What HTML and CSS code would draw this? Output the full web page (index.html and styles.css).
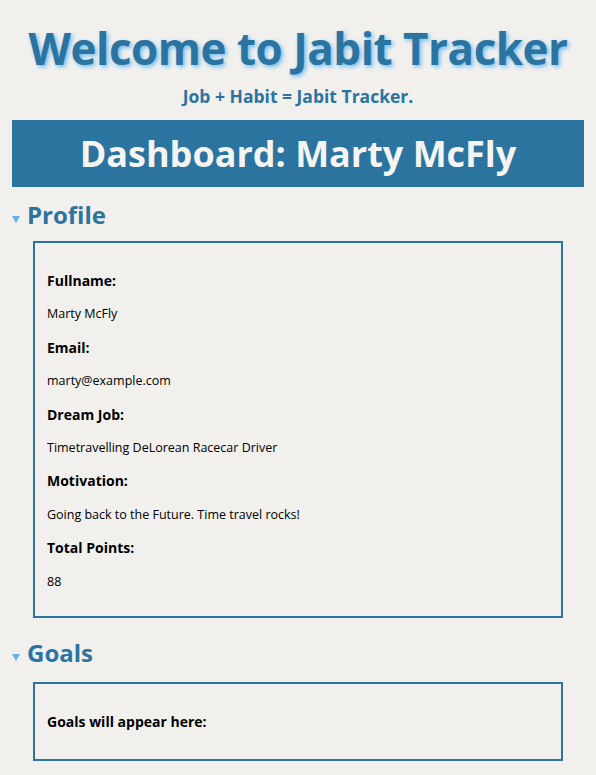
FILE: index.html
```html
<!DOCTYPE html>
<html lang="en">
<head>
<meta charset="utf-8">
<title>Jabit Tracker</title>
<link rel="stylesheet" href="styles.css">
</head>
<body>
<header class="site-header">
  <h1 class="site-title">Welcome to Jabit Tracker</h1>
  <p class="tagline">Job + Habit = Jabit Tracker.</p>
</header>
<div class="banner"><h2 class="banner-title">Dashboard: Marty McFly</h2></div>
<details class="section" open>
  <summary class="section-title">Profile</summary>
  <div class="card">
    <p class="label">Fullname:</p>
    <p class="value">Marty McFly</p>
    <p class="label">Email:</p>
    <p class="value">marty@example.com</p>
    <p class="label">Dream Job:</p>
    <p class="value">Timetravelling DeLorean Racecar Driver</p>
    <p class="label">Motivation:</p>
    <p class="value">Going back to the Future. Time travel rocks!</p>
    <p class="label">Total Points:</p>
    <p class="value">88</p>
  </div>
</details>
<details class="section goals" open>
  <summary class="section-title">Goals</summary>
  <div class="card card-goals">
    <p class="label">Goals will appear here:</p>
  </div>
</details>
</body>
</html>
```
FILE: styles.css
```css
html, body {
  margin: 0;
  padding: 0;
}
body {
  background: #f1f0ed;
  padding: 0 12px;
  font-family: "Open Sans", "Noto Sans", "DejaVu Sans", sans-serif;
  color: #000;
}
.site-header {
  text-align: center;
}
.site-title {
  margin: 21px 0 0;
  font-size: 44px;
  line-height: 55px;
  font-weight: 700;
  color: #2c74a0;
  text-shadow: 2px 2px 4px #72bdf0;
  letter-spacing: -0.5px;
}
.tagline {
  margin: 8px 0 0;
  font-size: 17.5px;
  line-height: 24px;
  font-weight: 700;
  color: #2c74a0;
}
.banner {
  margin-top: 12px;
  background: #2c74a0;
  height: 67px;
  display: flex;
  align-items: center;
  justify-content: center;
}
.banner-title {
  margin: 0;
  font-size: 36px;
  line-height: 67px;
  font-weight: 700;
  color: #f5f4f1;
}
.section-title {
  list-style: none;
  display: flex;
  align-items: center;
  gap: 7px;
  margin-top: 13px;
  font-size: 24px;
  line-height: 30px;
  font-weight: 700;
  color: #2c74a0;
  cursor: pointer;
}
.section-title::-webkit-details-marker {
  display: none;
}
.section-title::before {
  content: "";
  width: 0;
  height: 0;
  border-left: 4px solid transparent;
  border-right: 4px solid transparent;
  border-top: 7px solid #5fb0ea;
  margin-top: 8px;
}
.goals .section-title {
  margin-top: 20px;
}
.card {
  margin: 11px 21px 0;
  border: 2px solid #2c74a0;
  padding: 21px 12px 18px;
}
.goals .card {
  margin-top: 14px;
  padding-bottom: 21px;
}
.label, .value {
  margin: 0;
  line-height: 33.4px;
}
.label {
  font-size: 14px;
  font-weight: 700;
}
.value {
  font-size: 12.5px;
}
```
